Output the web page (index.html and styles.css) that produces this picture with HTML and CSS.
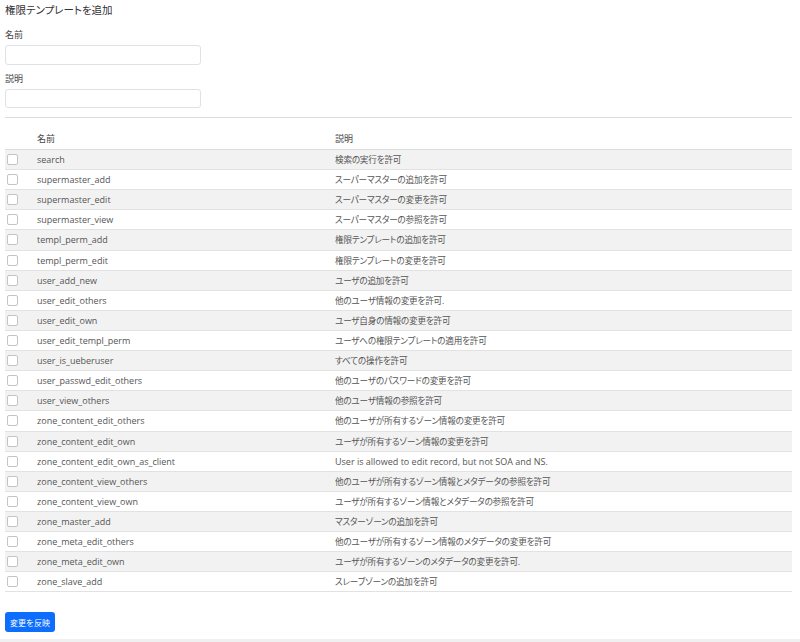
FILE: index.html
```html
<!DOCTYPE html>
<html lang="ja">
<head>
<meta charset="utf-8">
<link rel="stylesheet" href="styles.css">
</head>
<body>
<div class="page">
  <h1 class="title">権限テンプレートを追加</h1>
  <div class="field field-1">
    <label class="label">名前</label>
    <input class="input" type="text">
  </div>
  <div class="field field-2">
    <label class="label">説明</label>
    <input class="input input-2" type="text">
  </div>
  <hr class="rule">
  <table class="perms">
    <thead>
      <tr><th class="c-check"></th><th class="c-name">名前</th><th>説明</th></tr>
    </thead>
    <tbody>
      <tr><td><span class="box"></span></td><td>search</td><td class="desc">検索の実行を許可</td></tr>
      <tr><td><span class="box"></span></td><td>supermaster_add</td><td class="desc">スーパーマスターの追加を許可</td></tr>
      <tr><td><span class="box"></span></td><td>supermaster_edit</td><td class="desc">スーパーマスターの変更を許可</td></tr>
      <tr><td><span class="box"></span></td><td>supermaster_view</td><td class="desc">スーパーマスターの参照を許可</td></tr>
      <tr><td><span class="box"></span></td><td>templ_perm_add</td><td class="desc">権限テンプレートの追加を許可</td></tr>
      <tr><td><span class="box"></span></td><td>templ_perm_edit</td><td class="desc">権限テンプレートの変更を許可</td></tr>
      <tr><td><span class="box"></span></td><td>user_add_new</td><td class="desc">ユーザの追加を許可</td></tr>
      <tr><td><span class="box"></span></td><td>user_edit_others</td><td class="desc">他のユーザ情報の変更を許可.</td></tr>
      <tr><td><span class="box"></span></td><td>user_edit_own</td><td class="desc">ユーザ自身の情報の変更を許可</td></tr>
      <tr><td><span class="box"></span></td><td>user_edit_templ_perm</td><td class="desc">ユーザへの権限テンプレートの適用を許可</td></tr>
      <tr><td><span class="box"></span></td><td>user_is_ueberuser</td><td class="desc">すべての操作を許可</td></tr>
      <tr><td><span class="box"></span></td><td>user_passwd_edit_others</td><td class="desc">他のユーザのパスワードの変更を許可</td></tr>
      <tr><td><span class="box"></span></td><td>user_view_others</td><td class="desc">他のユーザ情報の参照を許可</td></tr>
      <tr><td><span class="box"></span></td><td>zone_content_edit_others</td><td class="desc">他のユーザが所有するゾーン情報の変更を許可</td></tr>
      <tr><td><span class="box"></span></td><td>zone_content_edit_own</td><td class="desc">ユーザが所有するゾーン情報の変更を許可</td></tr>
      <tr><td><span class="box"></span></td><td>zone_content_edit_own_as_client</td><td class="desc-en">User is allowed to edit record, but not SOA and NS.</td></tr>
      <tr><td><span class="box"></span></td><td>zone_content_view_others</td><td class="desc">他のユーザが所有するゾーン情報とメタデータの参照を許可</td></tr>
      <tr><td><span class="box"></span></td><td>zone_content_view_own</td><td class="desc">ユーザが所有するゾーン情報とメタデータの参照を許可</td></tr>
      <tr><td><span class="box"></span></td><td>zone_master_add</td><td class="desc">マスターゾーンの追加を許可</td></tr>
      <tr><td><span class="box"></span></td><td>zone_meta_edit_others</td><td class="desc">他のユーザが所有するゾーン情報のメタデータの変更を許可</td></tr>
      <tr><td><span class="box"></span></td><td>zone_meta_edit_own</td><td class="desc">ユーザが所有するゾーンのメタデータの変更を許可.</td></tr>
      <tr><td><span class="box"></span></td><td>zone_slave_add</td><td class="desc">スレーブゾーンの追加を許可</td></tr>
    </tbody>
  </table>
  <button class="btn" type="button">変更を反映</button>
</div>
<div class="footer-strip"></div>
</body>
</html>
```

FILE: styles.css
```css
html, body {
  margin: 0;
  padding: 0;
  background: #fff;
}
body {
  font-family: "Open Sans", "Noto Sans CJK JP", sans-serif;
  font-size: 9px;
  color: #555;
}
.page {
  padding: 2px 8px 0 5px;
}
.title {
  margin: 0;
  font-size: 10.5px;
  line-height: 16px;
  font-weight: 400;
  color: #333;
  font-feature-settings: "palt";
}
.field {
  display: flex;
  flex-direction: column;
}
.label {
  line-height: 14px;
  color: #444;
}
.field-1 .label {
  margin-top: 10px;
}
.field-2 .label {
  margin-top: 7px;
}
.input {
  margin-top: 3px;
  width: 196px;
  height: 20px;
  box-sizing: border-box;
  border: 1px solid #dee2e6;
  border-radius: 3px;
  background: #fff;
  padding: 0;
}
.input-2 {
  height: 19px;
}
.rule {
  margin: 9px 0 0 0;
  border: 0;
  border-top: 1px solid #dcdcdc;
}
.perms {
  margin-top: 10px;
  width: 100%;
  border-collapse: collapse;
}
.perms th {
  text-align: left;
  font-weight: 400;
  color: #444;
  height: 21px;
  padding: 0;
  border-bottom: 1px solid #dcdcdc;
}
.perms tbody tr {
  height: 20.12px;
}
.perms td {
  padding: 0;
  border-bottom: 1px solid #e2e2e2;
  white-space: nowrap;
}
.perms tbody tr:nth-child(odd) td {
  background: #f2f2f2;
}
.perms .desc {
  font-size: 8.6px;
  font-feature-settings: "palt";
  letter-spacing: -0.2px;
}
.c-check {
  width: 32px;
}
.c-name {
  width: 298px;
}
.box {
  display: block;
  margin-left: 2px;
  width: 9px;
  height: 9px;
  border: 1px solid #c4c4c4;
  border-radius: 2px;
  background: #fff;
}
.btn {
  margin-top: 20px;
  display: block;
  height: 20px;
  padding: 0 5px;
  border: 0;
  border-radius: 3px;
  background: #0d6efd;
  color: #fff;
  font-family: "Noto Sans CJK JP", sans-serif;
  font-size: 8px;
}
.footer-strip {
  margin-top: 7px;
  height: 4px;
  background: #f0f0f0;
}
```
